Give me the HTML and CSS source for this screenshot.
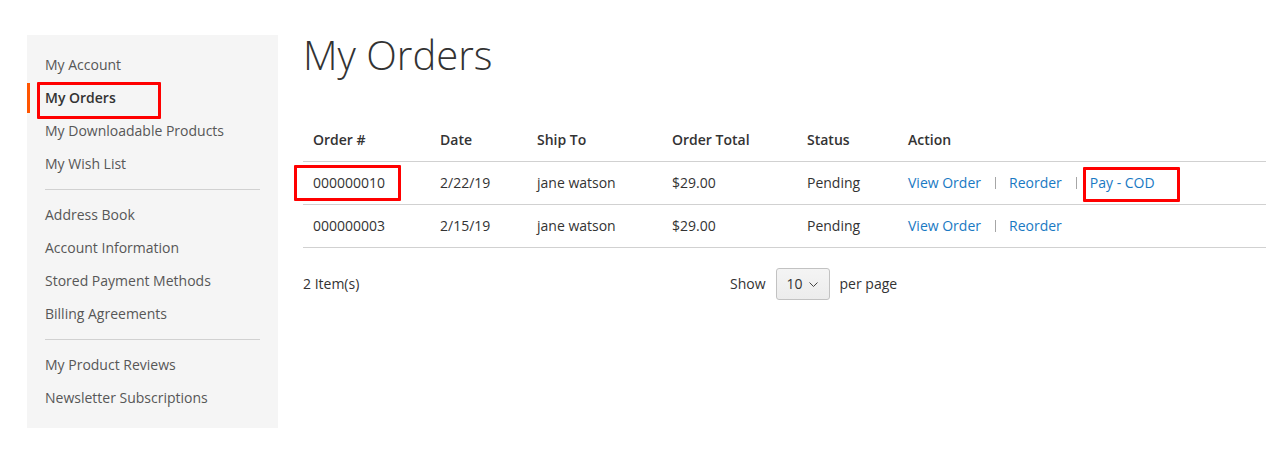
FILE: index.html
```html
<!DOCTYPE html>
<html lang="en">
<head>
<meta charset="utf-8">
<title>My Orders</title>
<link rel="stylesheet" href="styles.css">
</head>
<body>
<div class="page">
  <aside class="sidebar">
    <ul class="nav">
      <li class="nav-item"><a class="nav-link" href="#">My Account</a></li>
      <li class="nav-item current"><strong class="nav-link">My Orders</strong><span class="mark mark-nav"></span></li>
      <li class="nav-item"><a class="nav-link" href="#">My Downloadable Products</a></li>
      <li class="nav-item"><a class="nav-link" href="#">My Wish List</a></li>
      <li class="nav-delim"></li>
      <li class="nav-item"><a class="nav-link" href="#">Address Book</a></li>
      <li class="nav-item"><a class="nav-link" href="#">Account Information</a></li>
      <li class="nav-item"><a class="nav-link" href="#">Stored Payment Methods</a></li>
      <li class="nav-item"><a class="nav-link" href="#">Billing Agreements</a></li>
      <li class="nav-delim"></li>
      <li class="nav-item"><a class="nav-link" href="#">My Product Reviews</a></li>
      <li class="nav-item"><a class="nav-link" href="#">Newsletter Subscriptions</a></li>
    </ul>
  </aside>
  <main class="main">
    <h1 class="page-title">My Orders</h1>
    <table class="orders">
      <colgroup>
        <col class="c-id"><col class="c-date"><col class="c-ship"><col class="c-total"><col class="c-status"><col class="c-action">
      </colgroup>
      <thead>
        <tr><th>Order #</th><th>Date</th><th>Ship To</th><th>Order Total</th><th>Status</th><th>Action</th></tr>
      </thead>
      <tbody>
        <tr>
          <td class="id-cell">000000010<span class="mark mark-id"></span></td>
          <td>2/22/19</td>
          <td>jane watson</td>
          <td>$29.00</td>
          <td>Pending</td>
          <td class="actions"><a class="action" href="#">View Order</a><span class="sep"></span><a class="action" href="#">Reorder</a><span class="sep"></span><span class="pay-wrap"><a class="action" href="#">Pay - COD</a><span class="mark mark-pay"></span></span></td>
        </tr>
        <tr>
          <td>000000003</td>
          <td>2/15/19</td>
          <td>jane watson</td>
          <td>$29.00</td>
          <td>Pending</td>
          <td class="actions"><a class="action" href="#">View Order</a><span class="sep"></span><a class="action" href="#">Reorder</a></td>
        </tr>
      </tbody>
    </table>
    <div class="toolbar">
      <p class="amount">2 Item(s)</p>
      <div class="limiter">
        <span class="limiter-label">Show</span>
        <span class="select">10
          <svg class="chev" width="9" height="5" viewBox="0 0 9 5"><path d="M0.5 0.5 L4.5 4.5 L8.5 0.5" fill="none" stroke="#444" stroke-width="1"/></svg>
        </span>
        <span class="limiter-text">per page</span>
      </div>
    </div>
  </main>
</div>
</body>
</html>
```

FILE: styles.css
```css
* { box-sizing: border-box; }
html, body { margin: 0; padding: 0; background: #fff; }
body {
  font-family: "Open Sans", "Liberation Sans", sans-serif;
  font-size: 14px;
  line-height: 20px;
  color: #333;
}
a { text-decoration: none; }

.page {
  display: flex;
  align-items: flex-start;
  gap: 25px;
  padding: 35px 13px 0 27px;
}

.sidebar {
  flex: 0 0 251px;
  background: #f5f5f5;
  padding: 15px 0 15px;
}
.nav {
  list-style: none;
  margin: 0;
  padding: 0;
  display: flex;
  flex-direction: column;
  gap: 3px;
}
.nav-item { position: relative; }
.nav-link {
  display: block;
  padding: 5px 18px;
  color: #575757;
  font-weight: 400;
}
.current .nav-link {
  color: #333;
  font-weight: 600;
  border-left: 3px solid #ff5501;
  padding-left: 15px;
}
.nav-delim {
  border-top: 1px solid #d1d1d1;
  margin: 7px 18px 7px;
}

.mark {
  position: absolute;
  border: 3px solid #f00;
  border-radius: 1px;
  pointer-events: none;
}
.mark-nav { left: 10px; top: -1px; width: 124px; height: 37px; }
.mark-id { left: -9px; top: 3px; width: 107px; height: 36px; }
.mark-pay { left: -7px; top: -6px; width: 97px; height: 35px; }

.main { flex: 1; min-width: 0; }
.page-title {
  margin: 0;
  font-size: 40px;
  line-height: 40px;
  font-weight: 300;
  color: #333;
}

.orders {
  width: 963px;
  margin-top: 47px;
  border-collapse: collapse;
  table-layout: fixed;
}
.c-id { width: 127px; }
.c-date { width: 97px; }
.c-ship { width: 135px; }
.c-total { width: 135px; }
.c-status { width: 101px; }
.c-action { width: 368px; }
.orders th {
  text-align: left;
  font-weight: 600;
  padding: 8px 10px 11px;
  border-bottom: 1px solid #d1d1d1;
}
.orders td {
  padding: 11px 10px;
  border-bottom: 1px solid #d1d1d1;
  white-space: nowrap;
}
.id-cell { position: relative; }
.action { color: #1979c3; }
.sep {
  display: inline-block;
  width: 1px;
  height: 12px;
  background: #a6a6a6;
  margin: 0 13px 0 14px;
  vertical-align: -1px;
}
.pay-wrap { position: relative; }

.toolbar {
  display: flex;
  align-items: center;
  margin-top: 20px;
}
.amount {
  flex: 0 0 427px;
  margin: 0;
}
.limiter {
  display: flex;
  align-items: center;
}
.limiter-label { margin-right: 10px; }
.select {
  display: inline-flex;
  align-items: center;
  height: 32px;
  width: 54px;
  padding: 0 0 0 10px;
  border: 1px solid #c2c2c2;
  border-radius: 3px;
  background: linear-gradient(#f4f4f4, #ececec);
  color: #333;
}
.chev { margin-left: 6px; }
.limiter-text { margin-left: 10px; }
```
